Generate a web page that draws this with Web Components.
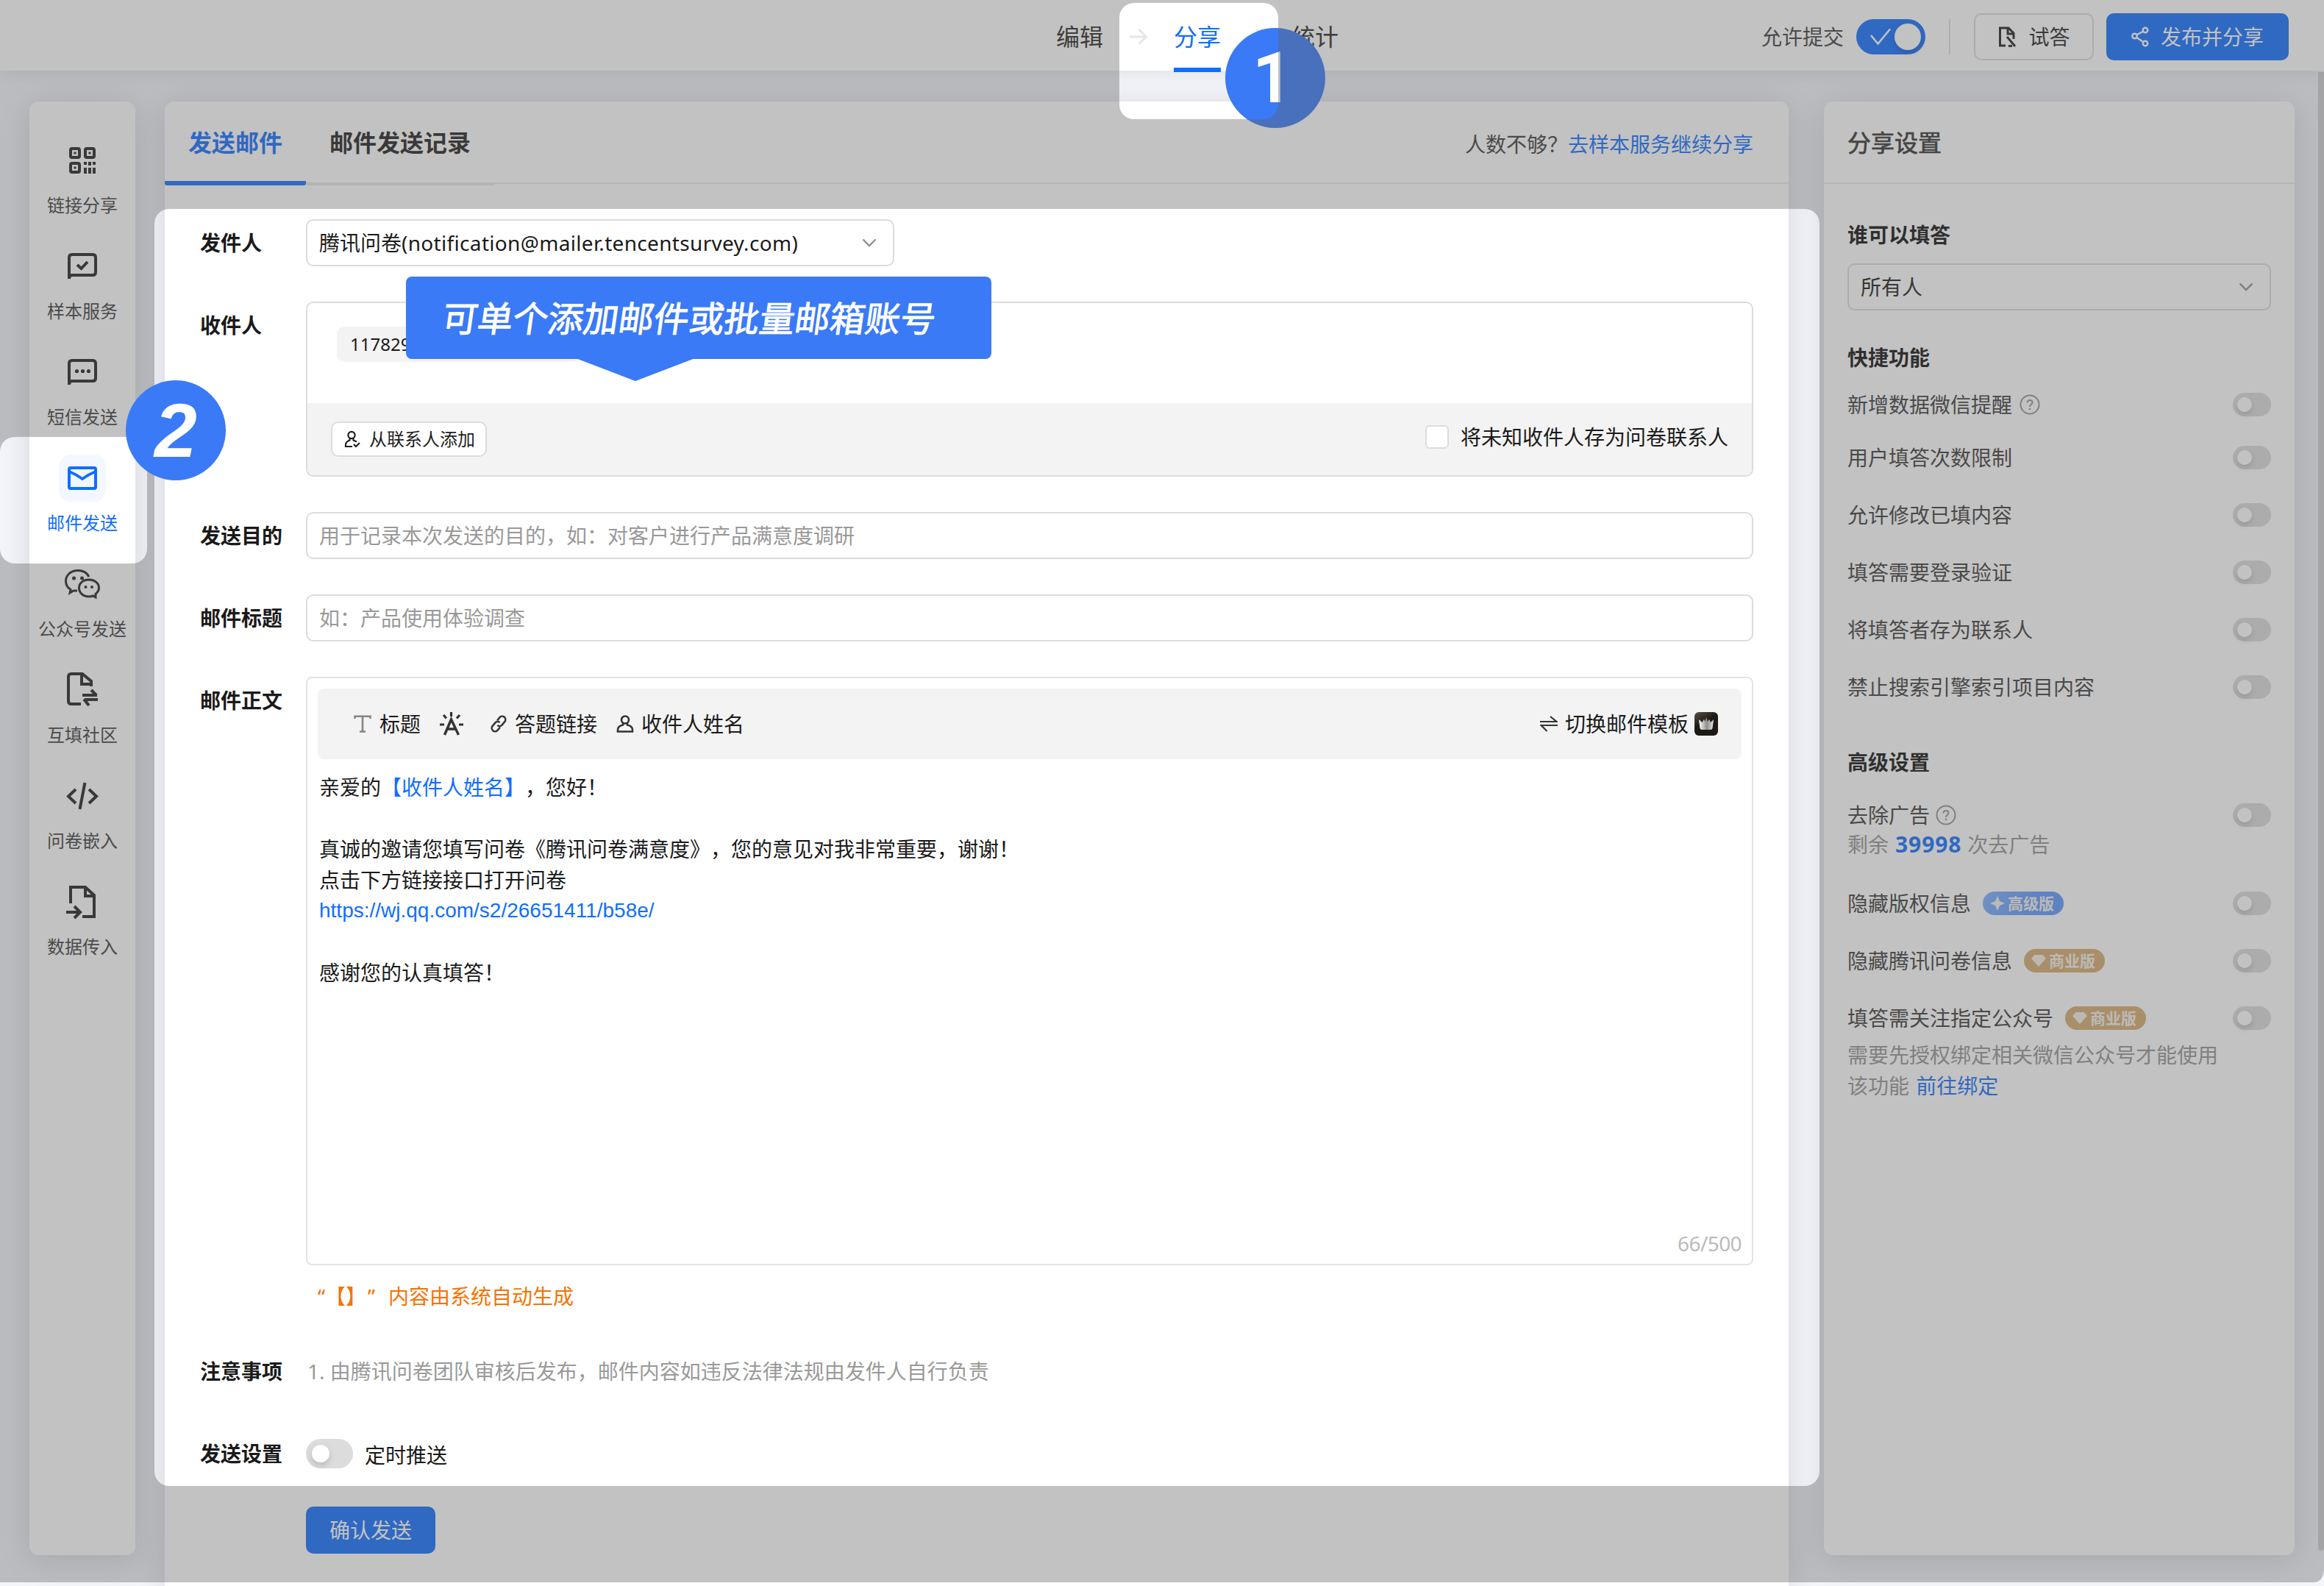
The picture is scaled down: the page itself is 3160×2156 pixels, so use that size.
<!DOCTYPE html>
<html lang="zh-CN">
<head>
<meta charset="utf-8">
<title>腾讯问卷 - 邮件发送</title>
<style>
html,body{margin:0;padding:0}
body{width:3160px;height:2156px;overflow:hidden;background:#f3f5fa;color:#1a1a1a;
 font:28px/42px "Noto Sans","Noto Sans CJK SC",sans-serif;text-spacing-trim:space-all}
</style>
</head>
<body>
<survey-app></survey-app>
<script>
const def=(name,html,setup)=>customElements.define(name,class extends HTMLElement{
  constructor(){
    super();
    const t=document.createElement('template');
    t.innerHTML='<style>*{box-sizing:border-box}</style>'+html;
    this.attachShadow({mode:'open'}).append(t.content.cloneNode(true));
  }
  connectedCallback(){ if(setup) setup(this,this.shadowRoot); }
});

/* icon name -> [width, height, markup] */
const S='fill="none" stroke="currentColor"';
const ICONS={
 arrow:[24,24,`<path ${S} stroke-width="3" d="M0 12H22M12.5 2L22.5 12L12.5 22"/>`],
 check:[28,24,`<path ${S} stroke-width="2.6" d="M1 10L10.5 21.5L27 1.5"/>`],
 chevron:[20,12,`<path ${S} stroke-width="2.4" d="M1.5 1.5L10 10L18.500 1.500"/>`],
 trial:[26,28,`<path ${S} stroke-width="3" d="M11 26H3.500V2H15L22 9V17M14 2V10H22M13 14L24 27M15 26.500H20"/>`],
 share:[24,28,`<g ${S} stroke-width="2.4"><circle cx="4.500" cy="13" r="3.300"/><circle cx="19" cy="5" r="3.300"/><circle cx="19" cy="23" r="3.300"/><path d="M7.500 11.300L16 6.700M7 15L16.300 21"/></g>`],
 qr:[48,48,`<g ${S} stroke-width="4"><rect x="8" y="8" width="12" height="12" rx="2"/><rect x="28" y="8" width="12" height="12" rx="2"/><rect x="8" y="28" width="12" height="12" rx="2"/></g><g fill="currentColor"><rect x="12.500" y="12.500" width="3" height="3"/><rect x="32.500" y="12.500" width="3" height="3"/><rect x="12.500" y="32.500" width="3" height="3"/><rect x="26" y="26" width="4" height="4"/><rect x="32" y="26" width="4" height="5"/><rect x="38" y="26" width="4" height="4"/><rect x="26" y="34" width="4" height="8"/><rect x="32" y="34" width="4" height="8"/><rect x="38" y="34" width="4" height="8"/></g>`],
 chatcheck:[48,48,`<path ${S} stroke-width="4" d="M6 41V12Q6 8 10 8H38Q42 8 42 12V32Q42 36 38 36H10Q7 36 6 40"/><path ${S} stroke-width="4" d="M17 22L22.500 27L31 18"/>`],
 chatdots:[48,48,`<path ${S} stroke-width="4" d="M6 41V12Q6 8 10 8H38Q42 8 42 12V32Q42 36 38 36H10Q7 36 6 40"/><g fill="currentColor"><circle cx="16.500" cy="22.500" r="2.600"/><circle cx="24.500" cy="22.500" r="2.600"/><circle cx="32.500" cy="22.500" r="2.600"/></g>`],
 mail:[48,48,`<rect ${S} stroke-width="4" x="6" y="10" width="36" height="28" rx="2"/><path ${S} stroke-width="3.600" d="M6 15Q16 19 24 25Q32 19 42 15"/>`],
 wechat:[48,48,`<g ${S} stroke-width="3"><path d="M33 14C30 8 25 5.500 18 5.500C8 5.500 1.500 12 1.500 20C1.500 25 4 29 8 31.500L7 36L12 33H17"/><path d="M42 37.500C45 35 46.500 32 46.500 29C46.500 22.500 40.500 18 33 18C25 18 19.500 22.500 19.500 29C19.500 36 25 41 33 41C35 41 37 40.500 38.500 40L42 42Z"/></g><g fill="currentColor"><circle cx="12.500" cy="16" r="2.500"/><circle cx="23.500" cy="16" r="2.500"/><circle cx="28.500" cy="28" r="2"/><circle cx="37" cy="28" r="2"/></g>`],
 fileswap:[48,48,`<path ${S} stroke-width="4" d="M22 43H9Q5 43 5 39V6Q5 2 9 2H24L36 12V19M23 2V16H37"/><path ${S} stroke-width="4" d="M24 31H44M36 24L43 31M45 37H27M26 36.500L33 45"/>`],
 code:[48,48,`<path ${S} stroke-width="4" d="M15 15L5 24.500L15 34M33 15L43 24.500L33 34M27.500 6L20.500 42"/>`],
 filein:[48,48,`<path ${S} stroke-width="4" d="M8 26V4H28L40 15V44H24M28 4V16H40M2 38H21M13 30L21 38L13 46"/>`],
 help:[28,28,`<circle ${S} stroke-width="2" cx="14" cy="14" r="12.500"/><path ${S} stroke-width="2" d="M10.500 11.500Q10.500 8 14 8Q17.500 8 17.500 11Q17.500 13 15.500 14Q14 15 14 17"/><circle fill="currentColor" cx="14" cy="20" r="1.300"/>`],
 contact:[22,24,`<g ${S} stroke-width="2.200"><circle cx="10" cy="6.500" r="4.600"/><path d="M7.500 11V13.500Q2 15.500 2 19.500V22H11M12.500 11V13.500L17 15.500M13 19L16 22L21 17"/></g>`],
 title:[24,24,`<path fill="none" stroke="#858585" stroke-width="2.600" d="M1.500 5V1.800H22.500V5M12 2V22.500M8 22.500H16"/>`],
 magic:[32,32,`<path ${S} stroke-width="3.400" d="M6.500 31L15.500 10L25.500 31M10 23H22"/><path ${S} stroke-width="3.200" d="M15.500 0V6M5 4L9 8.500M27 4L23 8.500M0 17H6M26 17H32"/>`],
 link:[24,24,`<g ${S} stroke-width="2.500" transform="rotate(-50 12 12)"><path d="M9.500 16.500H4.500A4.500 4.500 0 0 1 4.500 7.500H11A4.500 4.500 0 0 1 14.500 12M14.500 7.500H19.500A4.500 4.500 0 0 1 19.500 16.500H13A4.500 4.500 0 0 1 9.500 12"/></g>`],
 person:[24,24,`<g ${S} stroke-width="2.600"><circle cx="12" cy="6.500" r="5"/><path d="M9 11V13.500Q2 15 2 20V22.500H22V20Q22 15 15 13.500V11"/></g>`],
 swap:[24,22,`<path ${S} stroke-width="2.200" d="M0 8H22.500L14 1M24 13H1.500L9.500 21"/>`],
 crown:[32,32,`<defs><linearGradient id="a" x1="0" y1="0" x2=".6" y2="1"><stop offset="0" stop-color="#5b5044"/><stop offset=".5" stop-color="#1d1a16"/></linearGradient><linearGradient id="b"><stop offset="0" stop-color="#fff"/><stop offset=".55" stop-color="#8d8d8d"/><stop offset="1" stop-color="#e8e8e8"/></linearGradient></defs><rect width="32" height="32" rx="6" fill="url(#a)"/><path fill="url(#b)" d="M6 10L10.500 14L13 9.500L14.500 13L16.200 7L18 13L20 9.500L22 14L26 10L24.500 22Q24 24 22 24H10Q8 24 7.500 22Z"/>`],
 spark:[20,20,`<path fill="currentColor" d="M10 0L13 7L20 10L13 13L10 20L7 13L0 10L7 7Z"/>`],
 gem:[20,18,`<path fill="currentColor" d="M4.500 1H15.500L20 6L10 17L0 6Z"/>`]
};
def('ui-icon','<style>:host{display:block;flex:none}svg{display:block}</style><div></div>',(h,r)=>{
  const [w,ht,m]=ICONS[h.getAttribute('name')];
  r.querySelector('div').innerHTML=`<svg width="${w}" height="${ht}" viewBox="0 0 ${w} ${ht}">${m}</svg>`;
});

def('ui-switch',`<style>
:host{display:block;flex:none;width:52px;height:32px;border-radius:24px;background:#dcdcdc;padding:6px}
i{display:block;width:20px;height:20px;border-radius:50%;background:#fff;box-shadow:0 4px 8px rgba(0,0,0,.16)}
ui-icon{display:none}
:host([size=m]){width:64px;height:40px;padding:8px}
:host([size=m]) i{width:24px;height:24px}
:host([on]){width:94px;height:48px;background:#0f6eff;color:#fff;display:flex;align-items:center;justify-content:space-between;padding:6px 6px 6px 19px}
:host([on]) i{width:36px;height:36px}
:host([on]) ui-icon{display:block}
</style><ui-icon name="check"></ui-icon><i></i>`);

def('ui-select',`<style>
:host{display:flex;align-items:center;justify-content:space-between;height:64px;border:2px solid #dcdcdc;border-radius:10px;padding:0 22px 0 16px}
ui-icon{color:#8f8f8f}
</style><span><slot></slot></span><ui-icon name="chevron"></ui-icon>`);

def('ui-input',`<style>
:host{display:flex;align-items:center;height:64px;border:2px solid #dcdcdc;border-radius:10px;padding:0 16px;color:#999}
</style><slot></slot>`);

def('ui-button',`<style>
:host{display:flex;align-items:center;justify-content:center;height:64px;border-radius:10px;background:#0f6eff;color:#fff;padding:0;flex:none;white-space:nowrap}
:host([plain]){background:#fff;color:#1f1f1f;border:2px solid #dcdcdc}
</style><slot></slot>`);

def('app-header',`<style>
:host{display:flex;position:relative;height:96px;background:#fff;box-shadow:0 2px 24px rgba(0,0,0,.09);align-items:center;font-size:32px;padding:4px 48px 0 1436px;color:#262626;z-index:1}
nav{display:flex;align-items:center;gap:36px;height:96px}
nav ui-icon{color:#e6e6e6}
nav span{height:96px;line-height:95px}
nav .on{color:#0f6eff;border-bottom:6px solid #0f6eff}
.r{display:flex;align-items:center;margin-left:auto;font-size:28px}
.r>span{margin-right:17px;color:#3c3c3c}
.r>i{width:2px;height:48px;background:#e2e2e2;margin:0 32px}
.t{width:163px;margin-right:17px;gap:16px}.p{width:248px;gap:16px}
</style>
<nav><span>编辑</span><ui-icon name="arrow"></ui-icon><span class="on">分享</span><ui-icon name="arrow"></ui-icon><span>统计</span></nav>
<div class="r"><span>允许提交</span><ui-switch on></ui-switch><i></i><ui-button class="t" plain><ui-icon name="trial"></ui-icon>试答</ui-button><ui-button class="p"><ui-icon name="share"></ui-icon>发布并分享</ui-button></div>`);

const CARD='background:#fff;box-shadow:0 6px 44px rgba(0,0,0,.13);border-radius:12px;';

def('nav-item',`<style>
:host{display:flex;flex-direction:column;align-items:center;height:144px;font-size:24px;line-height:36px;color:#3c3c3c;white-space:nowrap}
b{display:flex;align-items:center;justify-content:center;width:64px;height:64px;border-radius:16px;margin-bottom:11px;color:#1f1f1f}
:host([on]){color:#0f6eff}:host([on]) b{background:#f3f8ff;color:#0f6eff}
</style><b></b><slot></slot>`,(h,r)=>{r.querySelector('b').innerHTML=`<ui-icon name="${h.getAttribute('icon')}"></ui-icon>`});

def('side-nav',`<style>:host{display:block;width:144px;height:1976px;padding-top:48px;${CARD}}</style>
<nav-item icon="qr">链接分享</nav-item><nav-item icon="chatcheck">样本服务</nav-item><nav-item icon="chatdots">短信发送</nav-item><nav-item icon="mail" on>邮件发送</nav-item><nav-item icon="wechat">公众号发送</nav-item><nav-item icon="fileswap">互填社区</nav-item><nav-item icon="code">问卷嵌入</nav-item><nav-item icon="filein">数据传入</nav-item>`);

def('form-row',`<style>
:host{display:flex;align-items:flex-start}
b{width:144px;flex:none;line-height:64px}
div{flex:1;min-width:0}
</style><b></b><div><slot></slot></div>`,(h,r)=>{r.querySelector('b').textContent=h.getAttribute('label')});

def('recipient-box',`<style>
:host{display:flex;flex-direction:column;height:238px;border:2px solid #dcdcdc;border-radius:10px;overflow:hidden}
.top{flex:1;padding:32px 40px}
.tag{width:331px;height:48px;line-height:48px;border-radius:10px;background:#f3f3f3;font-size:24px;padding-left:18px}
.foot{height:98px;background:#f3f3f3;display:flex;align-items:center;justify-content:space-between;padding:0 32px 2px}
ui-button{width:212px;height:48px;padding:0 0 0 2px;gap:12px;font-size:24px;margin-top:2px}
label{display:flex;align-items:center;gap:16px;margin-top:-4px}
i{width:32px;height:32px;background:#fff;border:2px solid #dcdcdc;border-radius:6px}
</style><div class="top"><div class="tag">117829</div></div>
<div class="foot"><ui-button plain><ui-icon name="contact"></ui-icon>从联系人添加</ui-button><label><i></i>将未知收件人存为问卷联系人</label></div>`);

def('mail-editor',`<style>
:host{display:flex;flex-direction:column;height:800px;border:2px solid #e4e4e4;border-radius:8px;padding:14px 14px 7px}
.bar{display:flex;align-items:center;height:96px;border-radius:8px;background:#f3f3f3;padding:0 32px 0 49px}
.bar ui-icon{color:#333}
.r{margin-left:auto;display:flex;align-items:center}
.txt{flex:1;padding:17px 2px 0}
p{margin:0;height:42px}
a,em{color:#0f6eff;font-style:normal}
a{font-family:"Liberation Sans",sans-serif;display:block;line-height:42px}
.cnt{text-align:right;color:#bbb;letter-spacing:-.6px}
</style>
<div class="bar"><ui-icon name="title"></ui-icon><span style="margin:0 26px 0 11px">标题</span><ui-icon name="magic"></ui-icon><ui-icon name="link" style="margin-left:36px"></ui-icon><span style="margin:0 26px 0 10px">答题链接</span><ui-icon name="person"></ui-icon><span style="margin-left:10px">收件人姓名</span>
<div class="r"><ui-icon name="swap"></ui-icon><span style="margin:0 8px 0 10px">切换邮件模板</span><ui-icon name="crown"></ui-icon></div></div>
<div class="txt"><p>亲爱的<em>【收件人姓名】</em>，您好！</p><p></p><p>真诚的邀请您填写问卷《腾讯问卷满意度》，您的意见对我非常重要，谢谢！</p><p>点击下方链接接口打开问卷</p><p><a>https://wj.qq.com/s2/26651411/b58e/</a></p><p></p><p>感谢您的认真填答！</p></div>
<div class="cnt">66/500</div>`);

def('mail-panel',`<style>
:host{display:block;width:2208px;height:2018px;${CARD}border-radius:12px 12px 0 0}
header{display:flex;height:112px;border-bottom:2px solid #eaeaea;padding-right:48px}
header b{font-size:32px;line-height:112px;padding:0 32px;height:114px;border-bottom:4px solid #eaeaea;color:#1f1f1f}
header b.on{color:#0f6eff;border-bottom:6px solid #0f6eff;border-radius:0 0 3px 3px}
header span{margin-left:auto;line-height:116px;color:#3c3c3c}
header a{color:#0f6eff}
section{display:flex;flex-direction:column;padding:48px 48px 0}
form-row{margin-bottom:48px}
.from{width:800px}
.latin{letter-spacing:.32px}
.tip{color:#f57200;margin-left:16px;margin-top:21px;height:43px;white-space:nowrap}
.tip i{font-style:normal;display:inline-block;width:10px}
.tip i+i{width:30px;padding-left:2px}
.note{color:#999;line-height:64px;padding-left:2px}
.sw{display:flex;align-items:center;gap:16px;height:64px}
.sw span{padding-top:4px}
.sub{width:176px;margin-left:144px}
</style>
<header><b class="on">发送邮件</b><b>邮件发送记录</b><span>人数不够？<a>去样本服务继续分享</a></span></header>
<section>
<form-row label="发件人"><ui-select class="from">腾讯问卷<span class="latin">(notification@mailer.tencentsurvey.com)</span></ui-select></form-row>
<form-row label="收件人"><recipient-box></recipient-box></form-row>
<form-row label="发送目的"><ui-input>用于记录本次发送的目的，如：对客户进行产品满意度调研</ui-input></form-row>
<form-row label="邮件标题"><ui-input>如：产品使用体验调查</ui-input></form-row>
<form-row label="邮件正文"><mail-editor></mail-editor><div class="tip"><i>“</i>【】<i>”</i>内容由系统自动生成</div></form-row>
<form-row label="注意事项"><div class="note">1. 由腾讯问卷团队审核后发布，邮件内容如违反法律法规由发件人自行负责</div></form-row>
<form-row label="发送设置" style="margin-bottom:40px"><div class="sw"><ui-switch size="m"></ui-switch><span>定时推送</span></div></form-row>
<ui-button class="sub">确认发送</ui-button>
</section>`);

def('plan-badge',`<style>
:host{display:flex;align-items:center;width:110px;height:32px;border-radius:16px;background:#d5ac6f;color:#f6f1ea;font:bold 21px/32px "Noto Sans","Noto Sans CJK SC",sans-serif;margin-left:16px;padding-left:10px;white-space:nowrap}
:host([pro]){background:linear-gradient(115deg,#7db0ff,#5a99ff 60%)}
div{margin-right:4px}
</style><div></div><slot></slot>`,(h,r)=>{
  r.querySelector('div').innerHTML=`<ui-icon name="${h.hasAttribute('pro')?'spark':'gem'}"></ui-icon>`});

def('setting-row',`<style>
:host{display:flex;align-items:center;height:42px;color:#3a3a3a;margin-top:36px}
ui-switch{margin-left:auto}
</style><slot></slot><ui-switch></ui-switch>`);

def('settings-panel',`<style>
:host{display:block;width:640px;height:1976px;${CARD}}
header{height:112px;border-bottom:2px solid #eaeaea;padding-left:32px;font-size:32px;-webkit-text-stroke:.7px #333;line-height:112px;color:#333}
section{padding:48px 32px 0;display:flex;flex-direction:column}
b{color:#101010}
ui-icon{color:#939393;margin-left:10px}
.g{color:#939393}
.g a,.g strong{color:#0f6eff}
strong{font-size:30px;letter-spacing:.9px;margin:0 8px 0 9px}
</style>
<header>分享设置</header>
<section><b>谁可以填答</b><ui-select style="margin-top:18px">所有人</ui-select>
<b style="margin-top:43px">快捷功能</b>
<setting-row style="margin-top:22px">新增数据微信提醒<ui-icon name="help"></ui-icon></setting-row>
<setting-row style="margin-top:30px">用户填答次数限制</setting-row>
<setting-row>允许修改已填内容</setting-row>
<setting-row>填答需要登录验证</setting-row>
<setting-row>将填答者存为联系人</setting-row>
<setting-row>禁止搜索引擎索引项目内容</setting-row>
<b style="margin-top:60px">高级设置</b>
<setting-row style="margin-top:30px">去除广告<ui-icon name="help" style="margin-left:8px"></ui-icon></setting-row>
<div class="g" style="margin-top:-2px;height:42px">剩余<strong>39998</strong>次去广告</div>
<setting-row style="margin-top:38px">隐藏版权信息<plan-badge pro>高级版</plan-badge></setting-row>
<setting-row>隐藏腾讯问卷信息<plan-badge>商业版</plan-badge></setting-row>
<setting-row>填答需关注指定公众号<plan-badge>商业版</plan-badge></setting-row>
<div class="g" style="margin-top:8px">需要先授权绑定相关微信公众号才能使用<br>该功能 <a style="margin-left:2px">前往绑定</a></div>
</section>`);

def('step-marker',`<style>
:host{display:flex;position:absolute;width:136px;height:136px;border-radius:50%;background:#3a7af6;color:#fff;align-items:center;justify-content:center;font:bold 97px/136px Roboto,"Liberation Sans",sans-serif}
</style><slot></slot>`);

def('tour-tip',`<style>
:host{display:block;position:absolute;width:796px;height:112px;border-radius:8px;background:#3a7af6;color:#fff}
span{display:block;margin-left:50px;font:400 48px/113px "Noto Sans","Noto Sans CJK SC",sans-serif;-webkit-text-stroke:1px #fff;letter-spacing:-.1px;white-space:nowrap;transform:skewX(-8deg)}
svg{position:absolute;left:231px;top:111px}
</style><span><slot></slot></span><svg width="162" height="31"><path fill="#3a7af6" d="M0 0H162L81 31Z"/></svg>`);

/* dimming layer with three rounded cut-outs */
def('tour-mask',`<style>:host{display:block;position:absolute;left:0;top:0;z-index:3}svg{display:block}</style><svg width="3160" height="2156"></svg>`,(h,r)=>{
  const hole=(x,y,w,ht,q=20)=>`M${x+q} ${y}h${w-2*q}a${q} ${q} 0 0 1 ${q} ${q}v${ht-2*q}a${q} ${q} 0 0 1 -${q} ${q}h-${w-2*q}a${q} ${q} 0 0 1 -${q} -${q}v-${ht-2*q}a${q} ${q} 0 0 1 ${q} -${q}Z`;
  r.querySelector('svg').innerHTML=`<path fill="#626262" fill-opacity=".39" fill-rule="evenodd" d="M0 0H3160V2135Q3158 2151 3146 2151H0Z${hole(1522,4,216,158)}${hole(0,594,200,172)}${hole(210,284,2264,1736)}"/>`;
});

def('survey-app',`<style>
:host{display:block;position:relative;width:3160px;height:2156px;overflow:hidden}
main{display:flex;align-items:flex-start;padding:42px 0 0 40px;gap:40px}
settings-panel{margin-left:8px}
.bar{width:8px;height:2010px;margin:-40px 0 0 -8px;background:#cecfd1;border-radius:0 0 4px 4px}
</style>
<app-header></app-header>
<main><side-nav></side-nav><mail-panel></mail-panel><settings-panel></settings-panel><div class="bar"></div></main>
<step-marker style="left:1666px;top:38px;z-index:2;padding-right:7px">1</step-marker>
<tour-mask></tour-mask>
<step-marker style="left:171px;top:517px;z-index:4;font-family:'Liberation Sans',sans-serif;font-style:italic;font-size:104px">2</step-marker>
<tour-tip style="left:552px;top:376px;z-index:4">可单个添加邮件或批量邮箱账号</tour-tip>`);
</script>
</body>
</html>
